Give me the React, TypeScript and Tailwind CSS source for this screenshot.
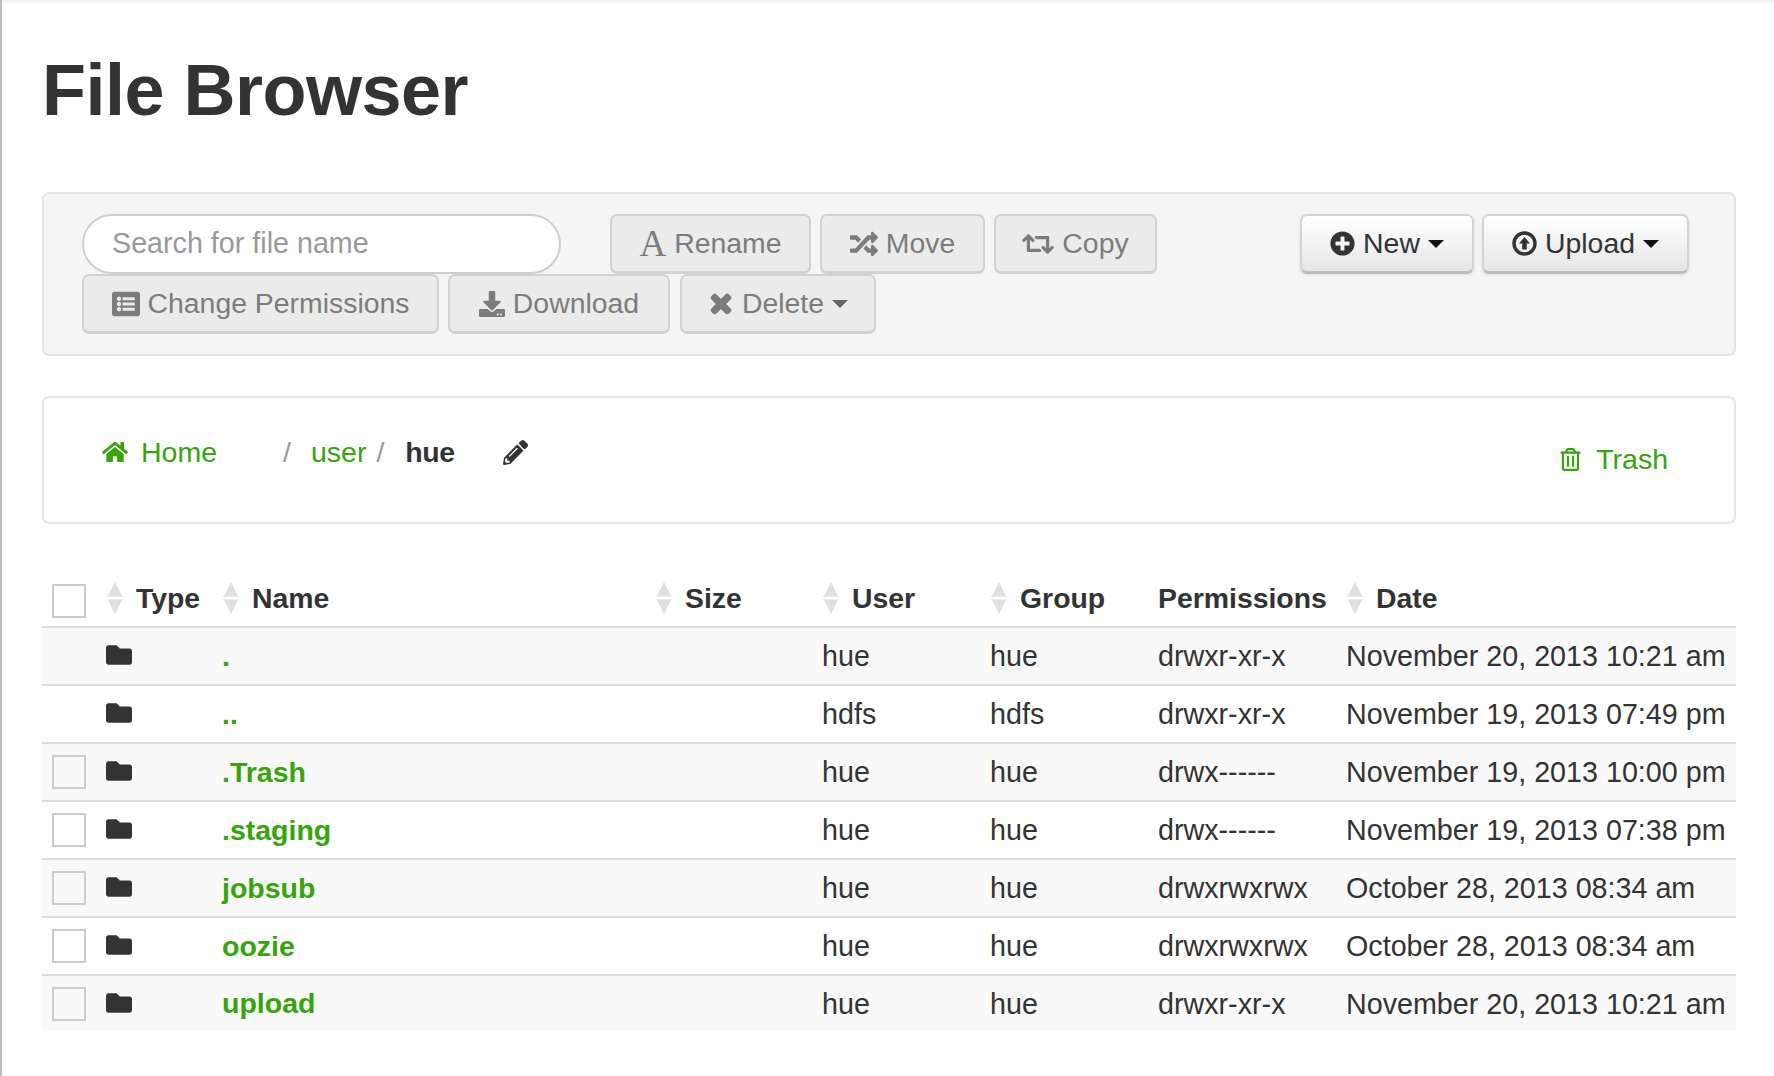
import React from 'react';
import {
  FaDownload,
  FaFolder,
  FaHome,
  FaListAlt,
  FaPencilAlt,
  FaPlusCircle,
  FaRandom,
  FaRegTrashAlt,
  FaRetweet,
  FaTimes,
} from 'react-icons/fa';

const rows = [
  { name: '.', user: 'hue', group: 'hue', perms: 'drwxr-xr-x', date: 'November 20, 2013 10:21 am', selectable: false },
  { name: '..', user: 'hdfs', group: 'hdfs', perms: 'drwxr-xr-x', date: 'November 19, 2013 07:49 pm', selectable: false },
  { name: '.Trash', user: 'hue', group: 'hue', perms: 'drwx------', date: 'November 19, 2013 10:00 pm', selectable: true },
  { name: '.staging', user: 'hue', group: 'hue', perms: 'drwx------', date: 'November 19, 2013 07:38 pm', selectable: true },
  { name: 'jobsub', user: 'hue', group: 'hue', perms: 'drwxrwxrwx', date: 'October 28, 2013 08:34 am', selectable: true },
  { name: 'oozie', user: 'hue', group: 'hue', perms: 'drwxrwxrwx', date: 'October 28, 2013 08:34 am', selectable: true },
  { name: 'upload', user: 'hue', group: 'hue', perms: 'drwxr-xr-x', date: 'November 20, 2013 10:21 am', selectable: true },
];

const SortIcon = () => (
  <svg width="18" height="34" viewBox="0 0 18 34" className="shrink-0">
    <path d="M9 1 L16 15 H2 Z" fill="#e0e0e0" />
    <path d="M9 33 L16 19 H2 Z" fill="#e0e0e0" />
    <path d="M0.5 15.5 H17.5 M0.5 18.5 H17.5" stroke="#ececec" strokeWidth="1" />
  </svg>
);

const Caret = ({ color }: { color: string }) => (
  <svg width="16" height="8" viewBox="0 0 16 8" className="shrink-0">
    <path d="M0 0 H16 L8 8 Z" fill={color} />
  </svg>
);

// Ring with a small solid arrow, the old glyphicon look
const UploadIcon = () => (
  <svg width="25" height="25" viewBox="0 0 25 25" className="shrink-0">
    <circle cx="12.5" cy="12.5" r="10.5" fill="none" stroke="#333333" strokeWidth="3.4" />
    <path d="M12.5 6 L18 12.5 H14.8 V18.5 H10.2 V12.5 H7 Z" fill="#333333" />
  </svg>
);

const DisabledButton: React.FC<{ className: string; children: React.ReactNode }> = ({ className, children }) => (
  <button className={`flex h-[60px] items-center justify-center gap-[8px] rounded-[7px] border-2 border-[#d2d2d2] border-b-[3px] bg-[#ebebeb] text-[28.4px] text-[#7c7c7c] ${className}`}>
    {children}
  </button>
);

const ActionButton: React.FC<{ className: string; children: React.ReactNode }> = ({ className, children }) => (
  <button className={`flex h-[60px] items-center justify-center gap-[8px] rounded-[7px] border-2 border-[#d4d4d4] border-b-[3px] border-b-[#bdbdbd] bg-gradient-to-b from-white to-[#e6e6e6] text-[28.4px] text-[#333333] shadow-[0_1px_3px_rgba(0,0,0,0.1)] ${className}`}>
    {children}
  </button>
);

const Checkbox = () => <div className="h-[34px] w-[34px] border-2 border-[#cccccc] bg-transparent" />;

const SortHeader: React.FC<{ label: string }> = ({ label }) => (
  <div className="flex items-center gap-[12px]">
    <SortIcon />
    <span>{label}</span>
  </div>
);

const App: React.FC = () => {
  return (
    <div className="h-[1076px] overflow-hidden border-l-2 border-[#bcbcbc] bg-white pl-[40px] pr-[38px] font-['Liberation_Sans',Arial,sans-serif] text-[28.7px] text-[#333333] shadow-[inset_0_6px_5px_-4px_rgba(0,0,0,0.08)]">
      <h1 className="pt-[44px] text-[72px] font-bold leading-[92px] tracking-[-0.5px] text-[#333333]">File Browser</h1>

      {/* Actions toolbar */}
      <div className="mt-[56px] flex h-[164px] justify-between rounded-[7px] border-2 border-[#e4e4e4] bg-[#f5f5f5] pl-[38px] pr-[45px] pt-[20px]">
        <div className="flex w-[1100px] flex-wrap content-start gap-x-[9px] gap-y-[0px]">
          <div className="mr-[40px] flex h-[60px] w-[479px] items-center rounded-full border-2 border-[#cfcfcf] bg-white pl-[28px] text-[#999999]">
            Search for file name
          </div>
          <DisabledButton className="w-[201px]">
            <span className="font-['Liberation_Serif',serif] text-[37px] leading-none">A</span>
            Rename
          </DisabledButton>
          <DisabledButton className="w-[165px]">
            <FaRandom className="text-[28px]" />
            Move
          </DisabledButton>
          <DisabledButton className="w-[163px]">
            <FaRetweet className="text-[32px]" />
            Copy
          </DisabledButton>
          <DisabledButton className="w-[357px]">
            <FaListAlt className="text-[28px]" />
            Change Permissions
          </DisabledButton>
          <DisabledButton className="w-[222px]">
            <FaDownload className="text-[26px]" />
            Download
          </DisabledButton>
          <DisabledButton className="ml-[1px] w-[196px]">
            <FaTimes className="text-[26px]" stroke="currentColor" strokeWidth={50} />
            Delete
            <Caret color="#666666" />
          </DisabledButton>
        </div>
        <div className="flex items-start gap-[8px]">
          <ActionButton className="w-[174px]">
            <FaPlusCircle className="text-[25px]" />
            New
            <Caret color="#111111" />
          </ActionButton>
          <ActionButton className="w-[207px]">
            <UploadIcon />
            Upload
            <Caret color="#111111" />
          </ActionButton>
        </div>
      </div>

      {/* Breadcrumbs */}
      <div className="mt-[40px] flex h-[128px] justify-between rounded-[7px] border-2 border-[#e6e6e6] pl-[58px] pr-[66px] text-[28.5px] text-[#36a50b]">
        <div className="flex h-[108px] items-center">
          <FaHome className="text-[26px]" />
          <span className="ml-[13px]">Home</span>
          <span className="ml-[66px] text-[#999999]">/</span>
          <span className="ml-[20px]">user</span>
          <span className="ml-[10px] text-[#999999]">/</span>
          <span className="ml-[21px] font-bold tracking-[-0.5px] text-[#333333]">hue</span>
          <FaPencilAlt className="ml-[48px] text-[25px] text-[#333333]" />
        </div>
        <div className="flex h-[122px] items-center">
          <FaRegTrashAlt className="text-[23px]" />
          <span className="ml-[14px]">Trash</span>
        </div>
      </div>

      {/* Files */}
      <table className="mt-[47px] w-full table-fixed border-collapse">
        <colgroup>
          <col className="w-[54px]" />
          <col className="w-[116px]" />
          <col className="w-[433px]" />
          <col className="w-[167px]" />
          <col className="w-[168px]" />
          <col className="w-[168px]" />
          <col className="w-[188px]" />
          <col />
        </colgroup>
        <thead>
          <tr className="h-[56px] border-b-2 border-[#dddddd] text-left text-[28.4px] font-bold">
            <th className="pl-[10px] align-middle">
              <div className="translate-y-[2px]">
                <Checkbox />
              </div>
            </th>
            <th className="pl-[10px]">
              <SortHeader label="Type" />
            </th>
            <th className="pl-[10px]">
              <SortHeader label="Name" />
            </th>
            <th className="pl-[10px]">
              <SortHeader label="Size" />
            </th>
            <th className="pl-[10px]">
              <SortHeader label="User" />
            </th>
            <th className="pl-[10px]">
              <SortHeader label="Group" />
            </th>
            <th className="pl-[10px]">Permissions</th>
            <th className="pl-[10px]">
              <SortHeader label="Date" />
            </th>
          </tr>
        </thead>
        <tbody>
          {rows.map((row, index) => (
            <tr key={row.name} className={`h-[58px] border-b-2 border-[#dddddd] last:h-[56px] last:border-b-0 ${index % 2 === 0 ? 'bg-[#f9f9f9]' : 'bg-white'}`}>
              <td className="pl-[10px]">{row.selectable && <Checkbox />}</td>
              <td className="pl-[10px]">
                <FaFolder className="-translate-y-[1px] text-[26px] text-[#333333]" />
              </td>
              <td className="pl-[10px] text-[28.5px] font-bold text-[#36a50b]">{row.name}</td>
              <td className="pl-[10px]" />
              <td className="pl-[10px] pt-[2px]">{row.user}</td>
              <td className="pl-[10px] pt-[2px]">{row.group}</td>
              <td className="pl-[10px] pt-[2px]">{row.perms}</td>
              <td className="whitespace-nowrap pl-[10px] pt-[2px]">{row.date}</td>
            </tr>
          ))}
        </tbody>
      </table>
    </div>
  );
};

export default App;
